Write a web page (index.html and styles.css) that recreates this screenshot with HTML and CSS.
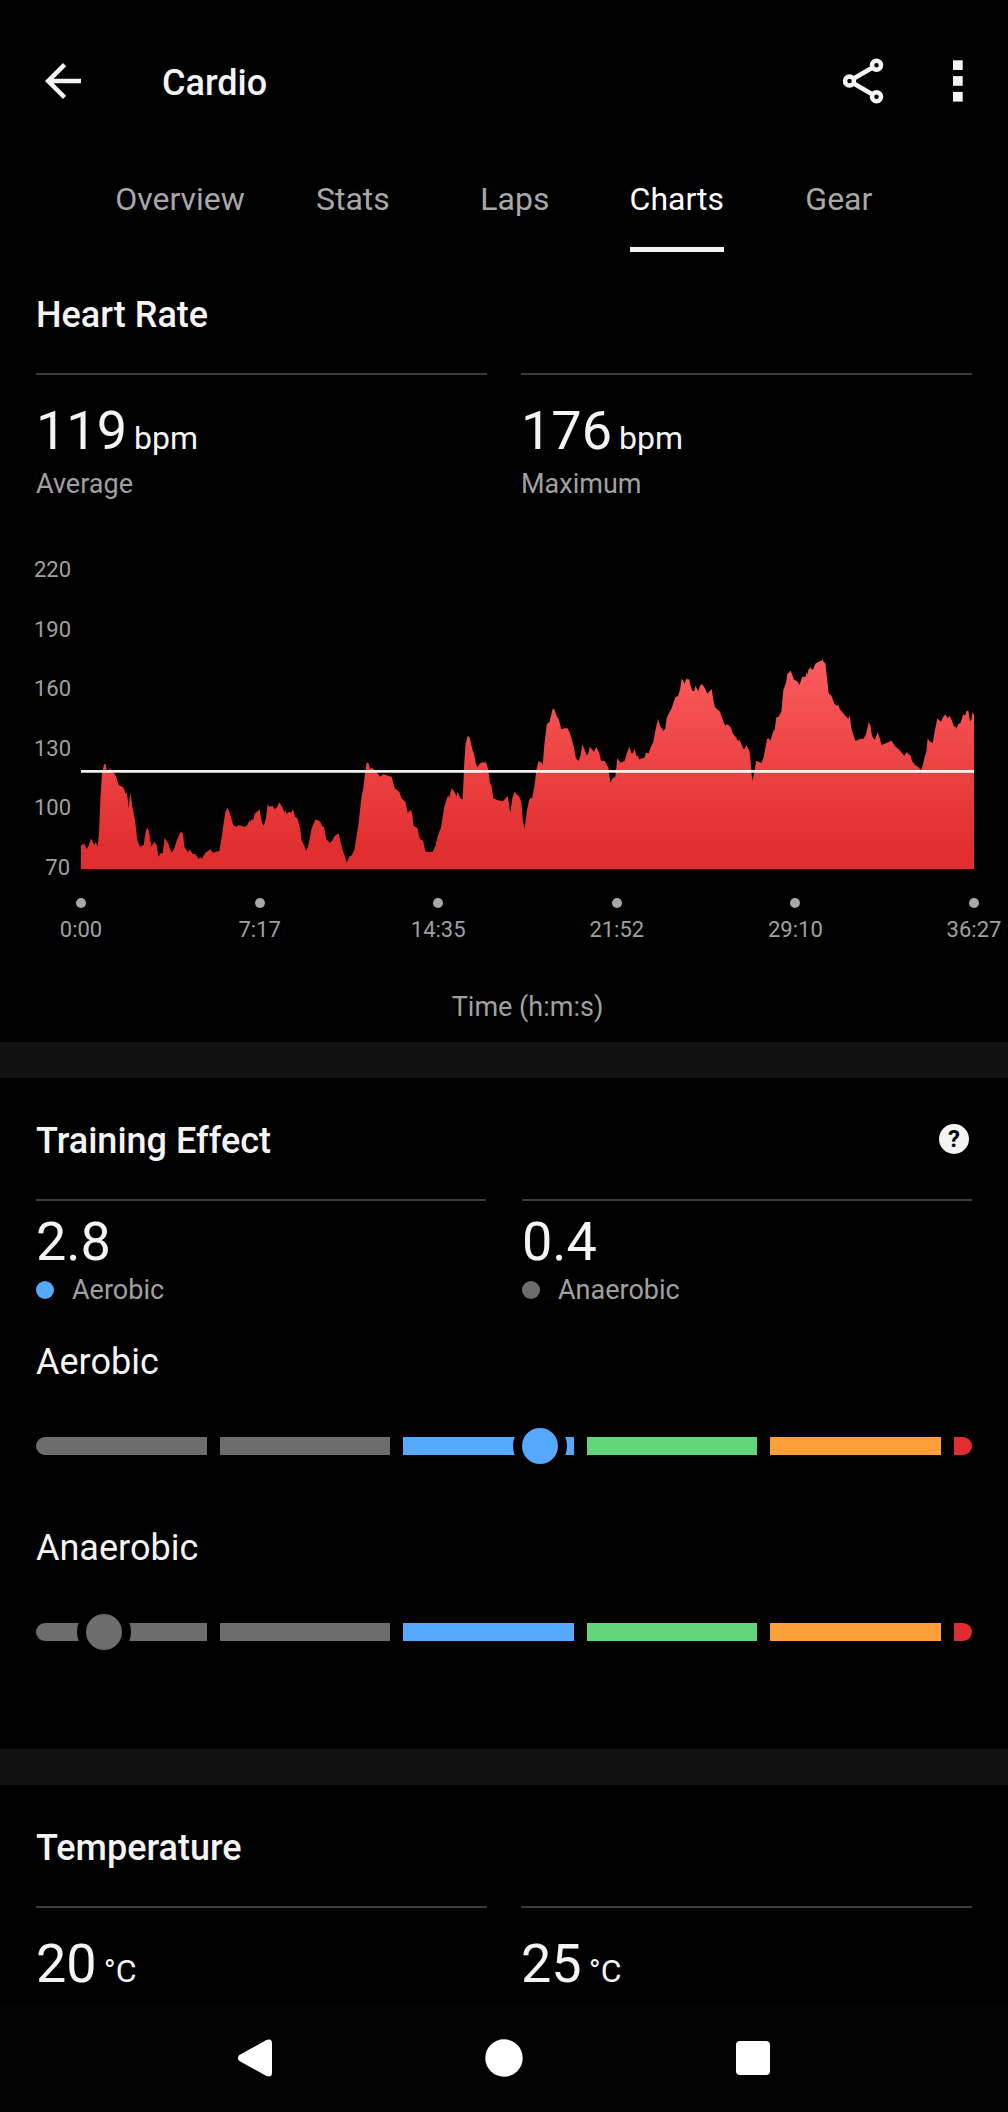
FILE: index.html
```html
<!DOCTYPE html>
<html lang="en">
<head>
  <meta charset="UTF-8" />
  <meta name="viewport" content="width=device-width, initial-scale=1.0"/>
  <title>Cardio | Charts</title>
  <link rel="stylesheet" href="styles.css">
</head>
<body>
  <header class="top-bar">
    <button class="icon-btn" aria-label="Back">
      <svg width="54" height="54" viewBox="0 0 24 24"><path d="M20 11H7.83l5.59-5.59L12 4l-8 8 8 8 1.41-1.41L7.83 13H20v-2z" fill="#f4f4f4"/></svg>
    </button>
    <h1>Cardio</h1>
    <button class="icon-btn" aria-label="Share">
      <svg width="54" height="54" viewBox="0 0 24 24" fill="none" stroke="#f4f4f4" stroke-width="2">
        <path d="M7.7 11L16.3 6M7.7 13L16.3 18"/>
        <circle cx="18" cy="5" r="2"/>
        <circle cx="6" cy="12" r="2"/>
        <circle cx="18" cy="19" r="2"/>
      </svg>
    </button>
    <button class="icon-btn" aria-label="More options">
      <svg width="28" height="54" viewBox="0 0 28 54" fill="#f4f4f4">
        <rect x="9" y="6.3" width="9.7" height="9.7"/>
        <rect x="9" y="22.1" width="9.7" height="9.7"/>
        <rect x="9" y="37.9" width="9.7" height="9.7"/>
      </svg>
    </button>
  </header>

  <nav class="tabs">
    <a href="#">Overview</a>
    <a href="#">Stats</a>
    <a href="#">Laps</a>
    <a href="#" class="active" aria-current="page"><span>Charts</span></a>
    <a href="#">Gear</a>
  </nav>

  <main>
    <!-- Heart rate -->
    <section class="heart-rate">
      <h2>Heart Rate</h2>
      <div class="stats">
        <div class="stat">
          <div class="value">119 <span class="unit">bpm</span></div>
          <div class="label">Average</div>
        </div>
        <div class="stat">
          <div class="value">176 <span class="unit">bpm</span></div>
          <div class="label">Maximum</div>
        </div>
      </div>

      <div class="chart">
        <div class="y-axis">
          <span>220</span>
          <span>190</span>
          <span>160</span>
          <span>130</span>
          <span>100</span>
          <span>70</span>
        </div>
        <svg class="plot" viewBox="0 0 2679 900" preserveAspectRatio="none" role="img" aria-label="Heart rate over time">
          <defs>
            <linearGradient id="hrFill" gradientUnits="userSpaceOnUse" x1="0" y1="270" x2="0" y2="900">
              <stop offset="0" stop-color="#fb5c5e"/>
              <stop offset="0.9" stop-color="#e12e2e"/>
              <stop offset="1" stop-color="#e02d2d"/>
            </linearGradient>
          </defs>
          <path fill="url(#hrFill)" d="M0 900 L0 829 10 824 17 840 24 828 29 809 34 815 40 828 44 818 50 833 54 793 58 693 63 613 69 586 74 586 77 605 83 605 87 598 92 609 100 613 107 628 113 648 127 655 134 675 138 670 143 718 148 670 154 713 162 753 169 813 177 833 188 828 194 788 199 775 204 788 211 833 220 818 227 828 232 863 239 853 245 853 251 806 259 818 272 851 280 838 287 815 299 788 306 793 310 833 321 850 326 841 335 856 342 854 353 869 358 865 363 869 373 851 389 841 395 851 415 846 420 818 425 783 433 728 440 716 449 741 457 769 467 773 473 768 491 774 499 768 506 753 509 759 513 747 516 755 522 733 528 728 536 721 542 758 548 771 555 748 560 706 565 713 575 710 580 720 587 716 595 700 603 713 611 731 614 723 617 736 623 728 630 731 636 721 642 743 649 748 657 778 662 813 676 845 683 825 692 778 704 751 718 758 724 773 729 773 736 811 746 821 754 815 759 803 773 793 782 833 790 858 797 881
            805 863 812 859 820 843 825 813 832 768 841 688 847 658 852 613 857 581 862 581 867 600 873 596 880 603 889 613 898 623 907 615 920 620 932 623 941 658 955 669 962 688 973 698 980 731 990 723 993 733 998 771 1009 777 1017 811 1026 815 1034 848 1047 848 1055 849 1064 828 1069 805 1080 775 1090 713 1099 685 1102 678 1104 688 1112 658 1120 668 1127 683 1130 668 1138 688 1145 691 1150 578 1154 523 1160 501 1166 505 1174 541 1180 558 1184 581 1189 595 1197 583 1210 579 1213 585 1214 575 1222 603 1227 643 1231 648 1237 688 1248 693 1266 697 1280 681 1288 731 1294 688 1300 669 1315 683 1321 701 1326 758 1331 779 1337 728 1345 691 1354 685 1360 653 1367 598 1373 575 1377 580 1382 580 1385 588 1390 528 1397 468 1401 461 1405 461 1415 419 1420 421 1427 441 1434 453 1441 481 1451 478 1460 478 1467 493 1477 528 1485 568 1493 576 1499 558 1504 526 1517 559 1523 551 1526 533 1539 548 1546 533 1555 553 1560 575 1570 575 1582 595 1588 641 1595 628 1603 623 1609 568 1619 581 1631 575 1638 551 1645 533 1651 553 1656 553 1661 539 1667 563 1670 559 1674 571 1690 566 1695 551 1703 553 1709 535 1717 518 1723 485 1731 449 1737 471 1748 486 1753 478 1757 448
            1761 438 1771 420 1783 385 1791 381 1797 363 1802 330 1806 333 1810 344 1817 328 1821 332 1825 330 1828 348 1835 366 1840 366 1843 351 1852 366 1857 350 1863 345 1871 356 1879 374 1892 360 1897 393 1902 415 1917 428 1929 463 1934 470 1938 465 1950 476 1955 493 1966 506 1970 515 1976 513 1988 541 1992 538 1996 528 2006 548 2009 578 2012 618 2015 635 2019 613 2026 575 2041 582 2048 565 2058 510 2063 508 2068 515 2078 483 2081 483 2086 445 2092 444 2101 428 2107 363 2115 341 2119 315 2129 305 2139 332 2149 337 2155 349 2164 323 2174 323 2177 308 2179 318 2182 303 2189 295 2193 303 2197 299 2203 284 2218 275 2223 275 2225 270 2228 279 2233 283 2237 318 2243 373 2251 380 2261 406 2269 410 2273 407 2276 420 2291 438 2302 450 2305 438 2308 453 2311 478 2323 516 2339 509 2347 510 2355 496 2363 460 2368 468 2373 500 2380 512 2385 505 2389 490 2395 503 2402 528 2416 522 2432 515 2441 530 2458 546 2470 560 2477 550 2489 560 2493 576 2502 588 2515 596 2518 604 2523 598 2531 563 2536 548 2540 508 2545 516 2555 523 2561 488 2569 448 2574 453 2580 458 2586 445 2594 436 2599 448 2606 441 2612 453 2619 473 2622 471 2626 479 2632 465 2638 463 2647 435 2652 440 2657 425 2662 425 2667 456 2671 453 2674 430 2679 438 2679 900Z"/>
          <!-- average -->
          <path d="M0 607H2679" stroke="#fff" stroke-opacity="0.95" stroke-width="8"/>
        </svg>
        <div class="x-axis">
          <span>0:00</span>
          <span>7:17</span>
          <span>14:35</span>
          <span>21:52</span>
          <span>29:10</span>
          <span>36:27</span>
        </div>
        <div class="axis-title">Time (h:m:s)</div>
      </div>
    </section>

    <!-- Training effect -->
    <section class="training">
      <div class="section-head">
        <h2>Training Effect</h2>
        <button class="help" aria-label="About training effect">?</button>
      </div>
      <div class="stats">
        <div class="stat">
          <div class="value">2.8</div>
          <div class="label"><span class="dot blue"></span>Aerobic</div>
        </div>
        <div class="stat">
          <div class="value">0.4</div>
          <div class="label"><span class="dot grey"></span>Anaerobic</div>
        </div>
      </div>

      <div class="gauge">
        <h3 id="aerobic">Aerobic</h3>
        <div class="gauge-bar" role="meter" aria-labelledby="aerobic" aria-valuemin="0" aria-valuemax="5" aria-valuenow="2.8">
          <span class="grey"></span>
          <span class="grey"></span>
          <span class="blue"></span>
          <span class="green"></span>
          <span class="orange"></span>
          <span class="red"></span>
          <i class="knob blue" style="left: 53.8%"></i>
        </div>
      </div>
      <div class="gauge">
        <h3 id="anaerobic">Anaerobic</h3>
        <div class="gauge-bar" role="meter" aria-labelledby="anaerobic" aria-valuemin="0" aria-valuemax="5" aria-valuenow="0.4">
          <span class="grey"></span>
          <span class="grey"></span>
          <span class="blue"></span>
          <span class="green"></span>
          <span class="orange"></span>
          <span class="red"></span>
          <i class="knob grey" style="left: 7.3%"></i>
        </div>
      </div>
    </section>

    <!-- Temperature -->
    <section class="temperature">
      <h2>Temperature</h2>
      <div class="stats">
        <div class="stat">
          <div class="value">20 <span class="unit">°C</span></div>
        </div>
        <div class="stat">
          <div class="value">25 <span class="unit">°C</span></div>
        </div>
      </div>
    </section>
  </main>

  <footer class="nav-bar">
    <button aria-label="Back">
      <svg width="38" height="38" viewBox="0 0 38 38"><path d="M3 16.3L29.5 1.6Q36 -1.5 36 4.5V33.5Q36 39.5 29.5 36.4L3 21.7Q0.8 19 3 16.3Z" fill="#fff"/></svg>
    </button>
    <button aria-label="Home">
      <svg width="38" height="38" viewBox="0 0 38 38"><circle cx="19" cy="19" r="18.7" fill="#fff"/></svg>
    </button>
    <button aria-label="Recent apps">
      <svg width="38" height="38" viewBox="0 0 38 38"><rect x="2" y="2" width="34" height="34" rx="4" fill="#fff"/></svg>
    </button>
  </footer>
</body>
</html>
```
FILE: styles.css
```css
* {
  box-sizing: border-box;
}

body {
  margin: 0;
  min-height: 100vh;
  display: flex;
  flex-direction: column;
  font-family: Roboto, sans-serif;
  background: #000;
  color: #f4f4f4;
}

h1, h2, h3 {
  margin: 0;
  font-size: 36px;
  font-weight: 500;
  line-height: 42px;
}

button {
  padding: 0;
  background: none;
  border: none;
  cursor: pointer;
}

svg {
  display: block;
}

.top-bar {
  display: flex;
  align-items: center;
  padding: 54px 36px 0;
}

.top-bar h1 {
  flex: 1;
  margin-left: 72px;
  padding-top: 4px;
}

.icon-btn + .icon-btn {
  margin-left: 54px;
}

/* Tabs */
.tabs {
  display: flex;
  justify-content: center;
  padding-top: 36px;
}

.tabs a {
  min-width: 162px;
  height: 108px;
  padding: 0 27px;
  display: flex;
  justify-content: center;
  font-size: 32px;
  line-height: 110px;
  color: #a8a8a8;
  text-decoration: none;
}

.tabs a.active {
  color: #fff;
}

.tabs .active span {
  border-bottom: 5px solid #f4f4f4;
}

/* Sections */
main {
  flex: 1;
}

section {
  padding: 42px 36px 0;
}

section + section {
  border-top: 36px solid #111;
}

section h2 {
  margin-bottom: 37px;
}

.stats {
  display: grid;
  grid-template-columns: 1fr 1fr;
  gap: 34px;
}

.stat {
  border-top: 2px solid #3c3c3c;
  padding-top: 26px;
}

.value {
  display: flex;
  align-items: baseline;
  gap: 7px;
  font-size: 54px;
  line-height: 60px;
}

.unit {
  font-size: 32px;
  line-height: 32px;
}

.label {
  display: flex;
  align-items: center;
  margin-top: 5px;
  font-size: 27px;
  line-height: 36px;
  color: #a0a0a0;
}

/* Heart rate chart */
.heart-rate {
  padding-bottom: 17px;
}

.chart {
  display: grid;
  grid-template-columns: 36px 1fr;
  column-gap: 11px;
  margin: 67px -2px 0;
  color: #a0a0a0;
}

.y-axis {
  display: flex;
  flex-direction: column;
  justify-content: space-between;
  margin: -12px 0;
  font-size: 22px;
  line-height: 26px;
  text-align: right;
}

.plot {
  width: 100%;
  height: 300px;
}

.x-axis {
  grid-column: 2;
  display: flex;
  justify-content: space-between;
  margin-top: 29px;
  font-size: 22px;
  line-height: 26px;
}

.x-axis span {
  width: 0;
  display: flex;
  flex-direction: column;
  align-items: center;
  gap: 9px;
  white-space: nowrap;
}

.x-axis span::before {
  content: '';
  width: 10px;
  height: 10px;
  background: #a8a8a8;
  border-radius: 50%;
}

.axis-title {
  grid-column: 2;
  margin-top: 46px;
  font-size: 27px;
  line-height: 36px;
  text-align: center;
}

/* Training effect */
.training {
  padding-bottom: 108px;
}

.section-head {
  display: flex;
  justify-content: space-between;
}

.help {
  width: 30px;
  height: 30px;
  margin: 4px 3px 0 0;
  background: #f4f4f4;
  border-radius: 50%;
  font-family: inherit;
  font-size: 24px;
  font-weight: 700;
  line-height: 30px;
  color: #000;
}

.training .stats {
  gap: 36px;
}

.training .stat {
  padding-top: 11px;
}

.training .label {
  margin-top: 0;
}

.dot {
  width: 18px;
  height: 18px;
  margin-right: 18px;
  border-radius: 50%;
}

.gauge {
  margin-top: 33px;
}

.gauge + .gauge {
  margin-top: 72px;
}

.gauge h3 {
  font-weight: 400;
  margin-bottom: 54px;
}

.gauge-bar {
  position: relative;
  display: grid;
  grid-template-columns: repeat(5, 1fr) 18px;
  gap: 13px;
  height: 18px;
}

.gauge-bar span:first-child {
  border-radius: 9px 0 0 9px;
}

.gauge-bar .red {
  border-radius: 0 9px 9px 0;
}

.knob {
  position: absolute;
  top: 50%;
  width: 36px;
  height: 36px;
  margin: -18px 0 0 -18px;
  border-radius: 50%;
  box-shadow: 0 0 0 9px #000;
}

.grey {
  background: #6d6d6d;
}

.blue {
  background: #55a9ff;
}

.green {
  background: #62d47a;
}

.orange {
  background: #ff9f3b;
}

.red {
  background: #e02d2f;
}

/* Android navigation bar */
.nav-bar {
  display: flex;
  justify-content: center;
  height: 108px;
  background: #030303;
}

.nav-bar button {
  width: 249px;
  display: flex;
  align-items: center;
  justify-content: center;
}
```
